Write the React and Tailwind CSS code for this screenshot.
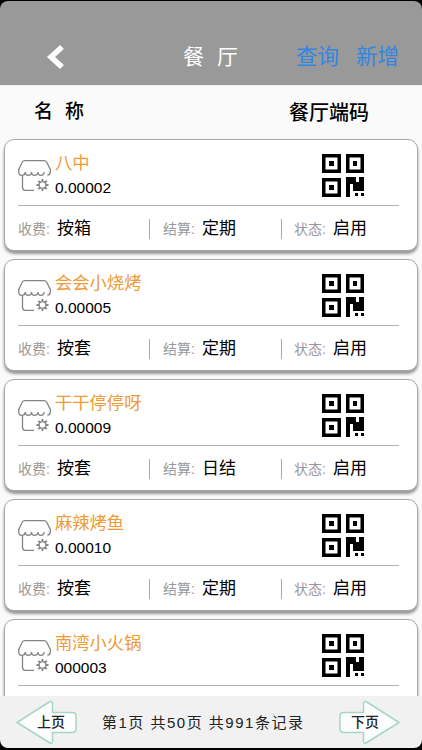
import React from "react";

const shops = [
  { name: "八中", code: "0.00002", fee: "按箱", settle: "定期" },
  { name: "会会小烧烤", code: "0.00005", fee: "按套", settle: "定期" },
  { name: "干干停停呀", code: "0.00009", fee: "按套", settle: "日结" },
  { name: "麻辣烤鱼", code: "0.00010", fee: "按套", settle: "定期" },
  { name: "南湾小火锅", code: "000003", fee: "按套", settle: "定期" },
];

const ShopIcon = () => (
  <svg width="34" height="34" viewBox="0 0 34 34" fill="none" stroke="#858585" strokeWidth="1.300" className="shrink-0">
    <path d="M7 1.700h19c1.500 0 2.300.6 2.900 1.800l3.400 7v2.500c0 1.800-1.200 3-2.800 3" />
    <path d="M7 1.700c-1.500 0-2.300.6-2.900 1.800l-3.400 7v2.500c0 4.500 6.300 4.500 6.500 0 .2 4.500 6.100 4.500 6.300 0 .2 4.500 6.100 4.500 6.300 0 .2 4.500 6.100 4.500 6.300 0" />
    <path d="M4.500 17v11.500c0 1.800.9 2.800 2.600 2.800h9" />
    <circle cx="24.500" cy="26" r="3.400" strokeWidth="1.400" />
    <path
      strokeWidth="1.800"
      d="M24.500 20v2.400M24.500 29.600V32M18.500 26h2.400M28.100 26h2.400M20.300 21.800l1.700 1.700M27 28.500l1.700 1.700M20.300 30.200l1.700-1.700M27 23.500l1.700-1.700"
    />
  </svg>
);

const QrIcon = () => (
  <svg width="42" height="43" viewBox="0 0 42 43" className="shrink-0">
    <path fillRule="evenodd" d="M0 0h19v19H0zM3.500 3.500v12h12v-12zM24 0h18v19H24zM27.500 3.500v12h11v-12zM0 24h19v19H0zM3.500 27.500v12h12v-12z" />
    <path d="M7 7h5v5H7zM31 7h4v5h-4zM7 31h5v5H7z" />
    <path d="M24 23h10v5h3v-5h5v14H31v-7h-3v13h-4z" />
    <path d="M33 39h3v3h-3zM39 39h3v3h-3z" />
  </svg>
);

const Field = ({ label, value, className }) => (
  <div className={`flex items-center h-[20px] ${className}`}>
    <span className="text-[14px] text-[#999999]">{label}:</span>
    <span className="text-[17px] text-black ml-[7px]">{value}</span>
  </div>
);

const ShopCard = ({ shop }) => (
  <div className="mx-[4px] mb-[8px] h-[112px] shrink-0 rounded-[10px] border border-[#a9a9a9] bg-white shadow-[0_3px_3px_rgba(0,0,0,0.4)] px-[13px]">
    <div className="h-[66px] border-b border-[#b3b3b3] mr-[5px] flex items-start">
      <div className="mt-[19px]">
        <ShopIcon />
      </div>
      <div className="ml-[3px] flex flex-col mt-[10px]">
        <span className="text-[17.300px] leading-[26px] text-[#ee9a36]">{shop.name}</span>
        <span className="text-[15.500px] leading-[24px] text-black">{shop.code}</span>
      </div>
      <div className="ml-auto mr-[35px] mt-[14px]">
        <QrIcon />
      </div>
    </div>
    <div className="flex items-center h-[44px] pt-[2px]">
      <Field label="收费" value={shop.fee} className="w-[131px]" />
      <Field label="结算" value={shop.settle} className="w-[132px] border-l border-[#a9a9a9] pl-[13px]" />
      <Field label="状态" value="启用" className="border-l border-[#a9a9a9] pl-[12px]" />
    </div>
  </div>
);

const PageArrow = ({ flip, label }) => (
  <div className="relative w-[61px] h-[46px] shrink-0">
    <svg width="61" height="46" viewBox="0 0 61 46" className={flip ? "-scale-x-100" : ""}>
      <path
        d="M1 22.500 34 1.500c1-.6 2.500.2 2.500 1.500v9.500h20c2 0 3.500 1.500 3.500 3.500v13c0 2-1.500 3.500-3.500 3.500h-20v9c0 1.600-1.500 2.300-2.500 1.500z"
        fill="#fdfdfd"
        stroke="#a5d8c1"
        strokeWidth="1.500"
        strokeLinejoin="round"
      />
    </svg>
    <span className={`absolute top-[12px] text-[14px] leading-[20px] font-medium text-[#222222] ${flip ? "left-[12px]" : "left-[21px]"}`}>
      {label}
    </span>
  </div>
);

export default function App() {
  return (
    <div
      className="h-[750px] w-[422px] overflow-hidden bg-black pt-px pb-[2px] flex flex-col"
      style={{ fontFamily: '"Liberation Sans", "Noto Sans CJK SC", sans-serif' }}
    >
      <div className="h-[84px] shrink-0 bg-[#999999] rounded-t-[8px] flex items-end pb-[13px]">
        <svg width="20" height="26" viewBox="0 0 20 26" className="ml-[46px] mb-[2px]" fill="none" stroke="#ffffff" strokeWidth="5.500" strokeLinejoin="miter">
          <path d="M16 3 5 13l11 10" />
        </svg>
        <div className="ml-[117px] flex gap-[13px] text-[21px] leading-[30px] text-white">
          <span>餐</span>
          <span>厅</span>
        </div>
        <span className="ml-[58px] text-[21.500px] leading-[30px] text-[#2f86e3]">查询</span>
        <span className="ml-[17px] text-[21.500px] leading-[30px] text-[#2f86e3]">新增</span>
      </div>
      <div className="h-[54px] shrink-0 bg-[#fafafa] border-t border-[#f0f0f0] flex items-center text-[19px] font-medium text-black">
        <div className="ml-[34px] flex gap-[12px]">
          <span>名</span>
          <span>称</span>
        </div>
        <span className="ml-auto mr-[53px] text-[20px]">餐厅端码</span>
      </div>
      <div className="flex-1 min-h-0 overflow-hidden bg-[#fafafa] flex flex-col">
        {shops.map((shop) => (
          <ShopCard key={shop.code} shop={shop} />
        ))}
      </div>
      <div className="h-[52px] shrink-0 bg-[#f1f1f1] rounded-b-[8px] flex items-center pl-[16px] pr-[22px] pt-[2px]">
        <PageArrow label="上页" />
        <span className="ml-[25px] text-[15px] tracking-[1.500px] whitespace-nowrap text-[#222222]">第1页 共50页 共991条记录</span>
        <div className="ml-auto">
          <PageArrow flip label="下页" />
        </div>
      </div>
    </div>
  );
}
